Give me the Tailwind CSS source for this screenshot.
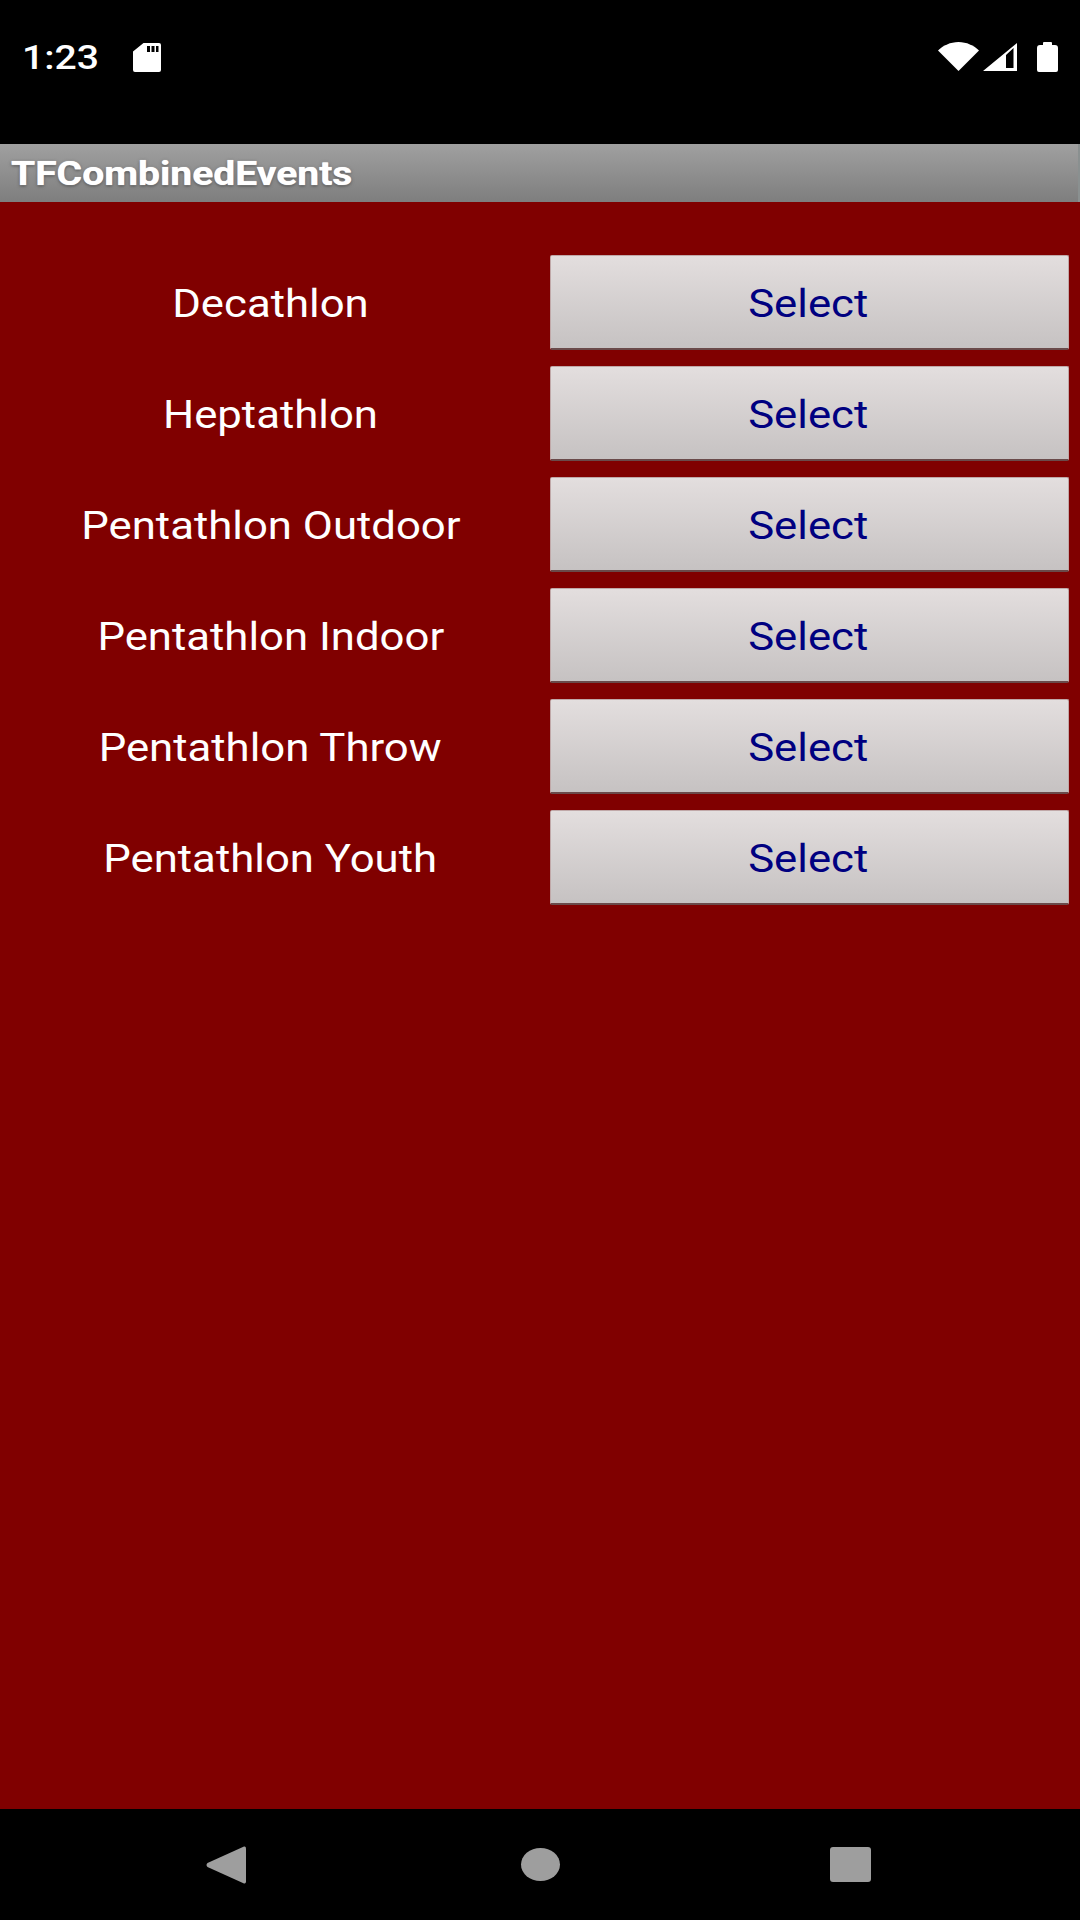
<!DOCTYPE html>
<html lang="en">
<head>
  <meta charset="UTF-8" />
  <meta name="viewport" content="width=device-width, initial-scale=1.0"/>
  <title>TFCombinedEvents</title>
  <script src="https://cdn.jsdelivr.net/npm/@tailwindcss/browser@4"></script>
</head>

<body class="w-[1080px] h-[1920px] flex flex-col bg-black text-white font-['Roboto',sans-serif] overflow-hidden">

<!-- status bar -->
<div class="h-[144px] shrink-0 bg-black flex items-start justify-between pt-[42px] pl-[22px] pr-[22px]">
  <div class="flex items-center h-[30px]">
    <span class="text-[34px] leading-[30px] font-medium inline-block origin-left scale-x-[1.15] w-[72px]">1:23</span>
    <svg class="ml-[39px]" width="28" height="29" viewBox="0 0 28 29">
      <path fill="#fff" fill-rule="evenodd" d="M10.500 0H26a2 2 0 0 1 2 2v25a2 2 0 0 1-2 2H2a2 2 0 0 1-2-2V8.500zM14 3v6h3V3zM18.500 3v6h3V3zM23 3v6h2.500V3z"/>
    </svg>
  </div>
  <div class="flex items-start">
    <svg width="41" height="29" viewBox="0 0 41 29">
      <path fill="#fff" d="M0 8.500C5 3.500 12.500 0 20.500 0S36 3.500 41 8.500L20.500 29z"/>
    </svg>
    <svg class="ml-[4px] mt-[1px]" width="34" height="28" viewBox="0 0 34 28">
      <path fill="#fff" fill-rule="evenodd" d="M34 0v28H0zM30.500 5L23 12v13h7.500z"/>
    </svg>
    <svg class="ml-[20px]" width="21" height="30" viewBox="0 0 21 30">
      <path fill="#fff" d="M6 3V1a1 1 0 0 1 1-1h7a1 1 0 0 1 1 1v2h3a3 3 0 0 1 3 3v22a2 2 0 0 1-2 2H2a2 2 0 0 1-2-2V6a3 3 0 0 1 3-3z"/>
    </svg>
  </div>
</div>

<!-- title bar -->
<div class="h-[58px] shrink-0 bg-linear-to-b from-[#a0a0a0] to-[#7e7e7e] border-r-2 border-[#8a9090] flex items-center pl-[11px]">
  <span class="text-[34px] font-bold inline-block origin-left scale-x-[1.148] [text-shadow:0_0_1px_#fff,0_1px_3px_#444]">TFCombinedEvents</span>
</div>

<!-- list -->
<main class="flex-1 bg-[#800000] pt-[53px] pl-[9px] pr-[11px] flex flex-col gap-[16px]">
  <div class="flex h-[95px] items-center">
    <div class="w-[523px] text-center text-[38px] pt-[3px]"><span class="inline-block scale-x-[1.15]">Decathlon</span></div>
    <button class="ml-[18px] flex-1 h-full rounded-[2px] bg-linear-to-b from-[#e3dede] to-[#c6c2c2] border border-[#c0a8a8] border-b-2 border-b-[#6a4a4a] pt-[5px] pr-[2px] text-[38px] text-[#000080]"><span class="inline-block scale-x-[1.15]">Select</span></button>
  </div>
  <div class="flex h-[95px] items-center">
    <div class="w-[523px] text-center text-[38px] pt-[3px]"><span class="inline-block scale-x-[1.15]">Heptathlon</span></div>
    <button class="ml-[18px] flex-1 h-full rounded-[2px] bg-linear-to-b from-[#e3dede] to-[#c6c2c2] border border-[#c0a8a8] border-b-2 border-b-[#6a4a4a] pt-[5px] pr-[2px] text-[38px] text-[#000080]"><span class="inline-block scale-x-[1.15]">Select</span></button>
  </div>
  <div class="flex h-[95px] items-center">
    <div class="w-[523px] text-center text-[38px] pt-[3px]"><span class="inline-block scale-x-[1.15]">Pentathlon Outdoor</span></div>
    <button class="ml-[18px] flex-1 h-full rounded-[2px] bg-linear-to-b from-[#e3dede] to-[#c6c2c2] border border-[#c0a8a8] border-b-2 border-b-[#6a4a4a] pt-[5px] pr-[2px] text-[38px] text-[#000080]"><span class="inline-block scale-x-[1.15]">Select</span></button>
  </div>
  <div class="flex h-[95px] items-center">
    <div class="w-[523px] text-center text-[38px] pt-[3px]"><span class="inline-block scale-x-[1.15]">Pentathlon Indoor</span></div>
    <button class="ml-[18px] flex-1 h-full rounded-[2px] bg-linear-to-b from-[#e3dede] to-[#c6c2c2] border border-[#c0a8a8] border-b-2 border-b-[#6a4a4a] pt-[5px] pr-[2px] text-[38px] text-[#000080]"><span class="inline-block scale-x-[1.15]">Select</span></button>
  </div>
  <div class="flex h-[95px] items-center">
    <div class="w-[523px] text-center text-[38px] pt-[3px]"><span class="inline-block scale-x-[1.15]">Pentathlon Throw</span></div>
    <button class="ml-[18px] flex-1 h-full rounded-[2px] bg-linear-to-b from-[#e3dede] to-[#c6c2c2] border border-[#c0a8a8] border-b-2 border-b-[#6a4a4a] pt-[5px] pr-[2px] text-[38px] text-[#000080]"><span class="inline-block scale-x-[1.15]">Select</span></button>
  </div>
  <div class="flex h-[95px] items-center">
    <div class="w-[523px] text-center text-[38px] pt-[3px]"><span class="inline-block scale-x-[1.15]">Pentathlon Youth</span></div>
    <button class="ml-[18px] flex-1 h-full rounded-[2px] bg-linear-to-b from-[#e3dede] to-[#c6c2c2] border border-[#c0a8a8] border-b-2 border-b-[#6a4a4a] pt-[5px] pr-[2px] text-[38px] text-[#000080]"><span class="inline-block scale-x-[1.15]">Select</span></button>
  </div>
</main>

<!-- nav bar -->
<div class="h-[111px] shrink-0 bg-black flex items-center pl-[206px]">
  <svg width="40" height="38" viewBox="0 0 40 38">
    <path fill="#9e9e9e" d="M38 0.500Q40 0 40 2.500V35.500Q40 38 38 37.500L1.500 21Q-0.500 19 1.500 17z"/>
  </svg>
  <div class="ml-[275px] w-[39px] h-[33px] rounded-[50%] bg-[#9e9e9e]"></div>
  <div class="ml-[270px] w-[41px] h-[35px] rounded-[3px] bg-[#9e9e9e]"></div>
</div>

</body>
</html>
